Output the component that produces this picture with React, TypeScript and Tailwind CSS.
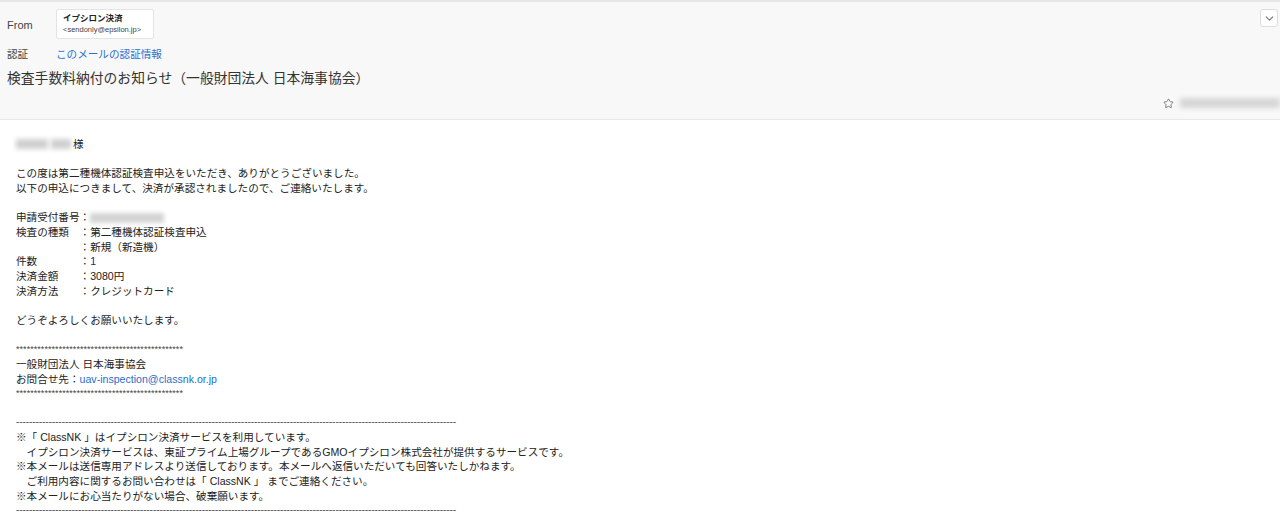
import { ChevronDown, Star } from 'lucide-react'

const font = { fontFamily: '"Liberation Sans", "Noto Sans CJK JP", sans-serif' }

export default function App() {
  const line = 'h-[14.67px] leading-[14.67px] whitespace-pre'

  return (
    <div className="w-[1280px] h-[532px] overflow-hidden bg-white text-[#222]" style={font}>
      {/* Header */}
      <div className="relative h-[120px] bg-[#f8f8f8] border-t-2 border-[#e6e6e6] border-b border-b-[#e8e8e8] px-[7px]">
        <div className="flex items-center h-[30px] mt-[7px]">
          <span className="w-[49px] text-[11px] text-[#444] pt-[2px]">From</span>
          <div className="w-[98px] h-[30px] bg-white border border-[#e4e4e4] rounded-[2px] px-[6px] pt-[3px]">
            <div className="text-[8.5px] font-bold leading-[11px] text-[#222]">イプシロン決済</div>
            <div className="text-[7.5px] leading-[12px] text-[#444]">&lt;sendonly@epsilon.jp&gt;</div>
          </div>
        </div>
        <button className="absolute right-[2px] top-[7px] w-[18px] h-[18px] bg-white border border-[#dcdcdc] rounded-[3px] flex items-center justify-center">
          <ChevronDown className="w-[13px] h-[13px] text-[#777]" strokeWidth={2} />
        </button>
        <div className="flex items-center h-[14px] mt-[9px]">
          <span className="w-[49px] text-[10.6px] text-[#444]">認証</span>
          <span className="text-[10.6px] text-[#2a73d0]">このメールの認証情報</span>
        </div>
        <div className="h-[17px] mt-[9px] flex items-center text-[13.8px] text-[#333]">
          検査手数料納付のお知らせ（一般財団法人 日本海事協会）
        </div>
        <div className="flex items-center justify-end h-[14px] mt-[8px] mr-[-7px]">
          <Star className="w-[11px] h-[11px] text-[#777] mr-[6px]" strokeWidth={2} />
          <div className="w-[100px] h-[10px] bg-[#d6d6d6] blur-[2.5px]" />
        </div>
      </div>

      {/* Body */}
      <div className="pt-[17px] px-[16px] text-[10.6px] text-[#222]">
        <div className={`${line} flex items-center`}>
          <span className="inline-block w-[32px] h-[10px] bg-[#cfcfcf] blur-[2.5px] mr-[3px]" />
          <span className="inline-block w-[20px] h-[10px] bg-[#cfcfcf] blur-[2.5px] mr-[2px]" />
          <span>様</span>
        </div>
        <div className={line}> </div>
        <div className={line}>この度は第二種機体認証検査申込をいただき、ありがとうございました。</div>
        <div className={line}>以下の申込につきまして、決済が承認されましたので、ご連絡いたします。</div>
        <div className={line}> </div>
        <div className={`${line} flex items-center`}>
          <span>申請受付番号：</span>
          <span className="inline-block w-[74px] h-[10px] bg-[#d4d4d4] blur-[2px]" />
        </div>
        <div className={line}>検査の種類　：第二種機体認証検査申込</div>
        <div className={line}>　　　　　　：新規（新造機）</div>
        <div className={line}>件数　　　　：<span className="text-[#1a2a6e]">1</span></div>
        <div className={line}>決済金額　　：3080円</div>
        <div className={line}>決済方法　　：クレジットカード</div>
        <div className={line}> </div>
        <div className={line}>どうぞよろしくお願いいたします。</div>
        <div className={line}> </div>
        <div className={`${line} text-[9px] tracking-[0.05px] text-[#444]`}>{'*'.repeat(47)}</div>
        <div className={line}>一般財団法人 日本海事協会</div>
        <div className={line}>
          お問合せ先：<span className="text-[#1f6fc8]">uav-inspection@classnk.or.jp</span>
        </div>
        <div className={`${line} text-[9px] tracking-[0.05px] text-[#444]`}>{'*'.repeat(47)}</div>
        <div className={line}> </div>
        <div className={`${line} text-[10.3px] tracking-[-0.17px] text-[#555]`}>{'-'.repeat(135)}</div>
        <div className={line}>※「 ClassNK 」はイプシロン決済サービスを利用しています。</div>
        <div className={line}>　イプシロン決済サービスは、東証プライム上場グループであるGMOイプシロン株式会社が提供するサービスです。</div>
        <div className={line}>※本メールは送信専用アドレスより送信しております。本メールへ返信いただいても回答いたしかねます。</div>
        <div className={line}>　ご利用内容に関するお問い合わせは「 ClassNK 」 までご連絡ください。</div>
        <div className={line}>※本メールにお心当たりがない場合、破棄願います。</div>
        <div className={`${line} text-[10.3px] tracking-[-0.17px] text-[#555]`}>{'-'.repeat(135)}</div>
      </div>
    </div>
  )
}
